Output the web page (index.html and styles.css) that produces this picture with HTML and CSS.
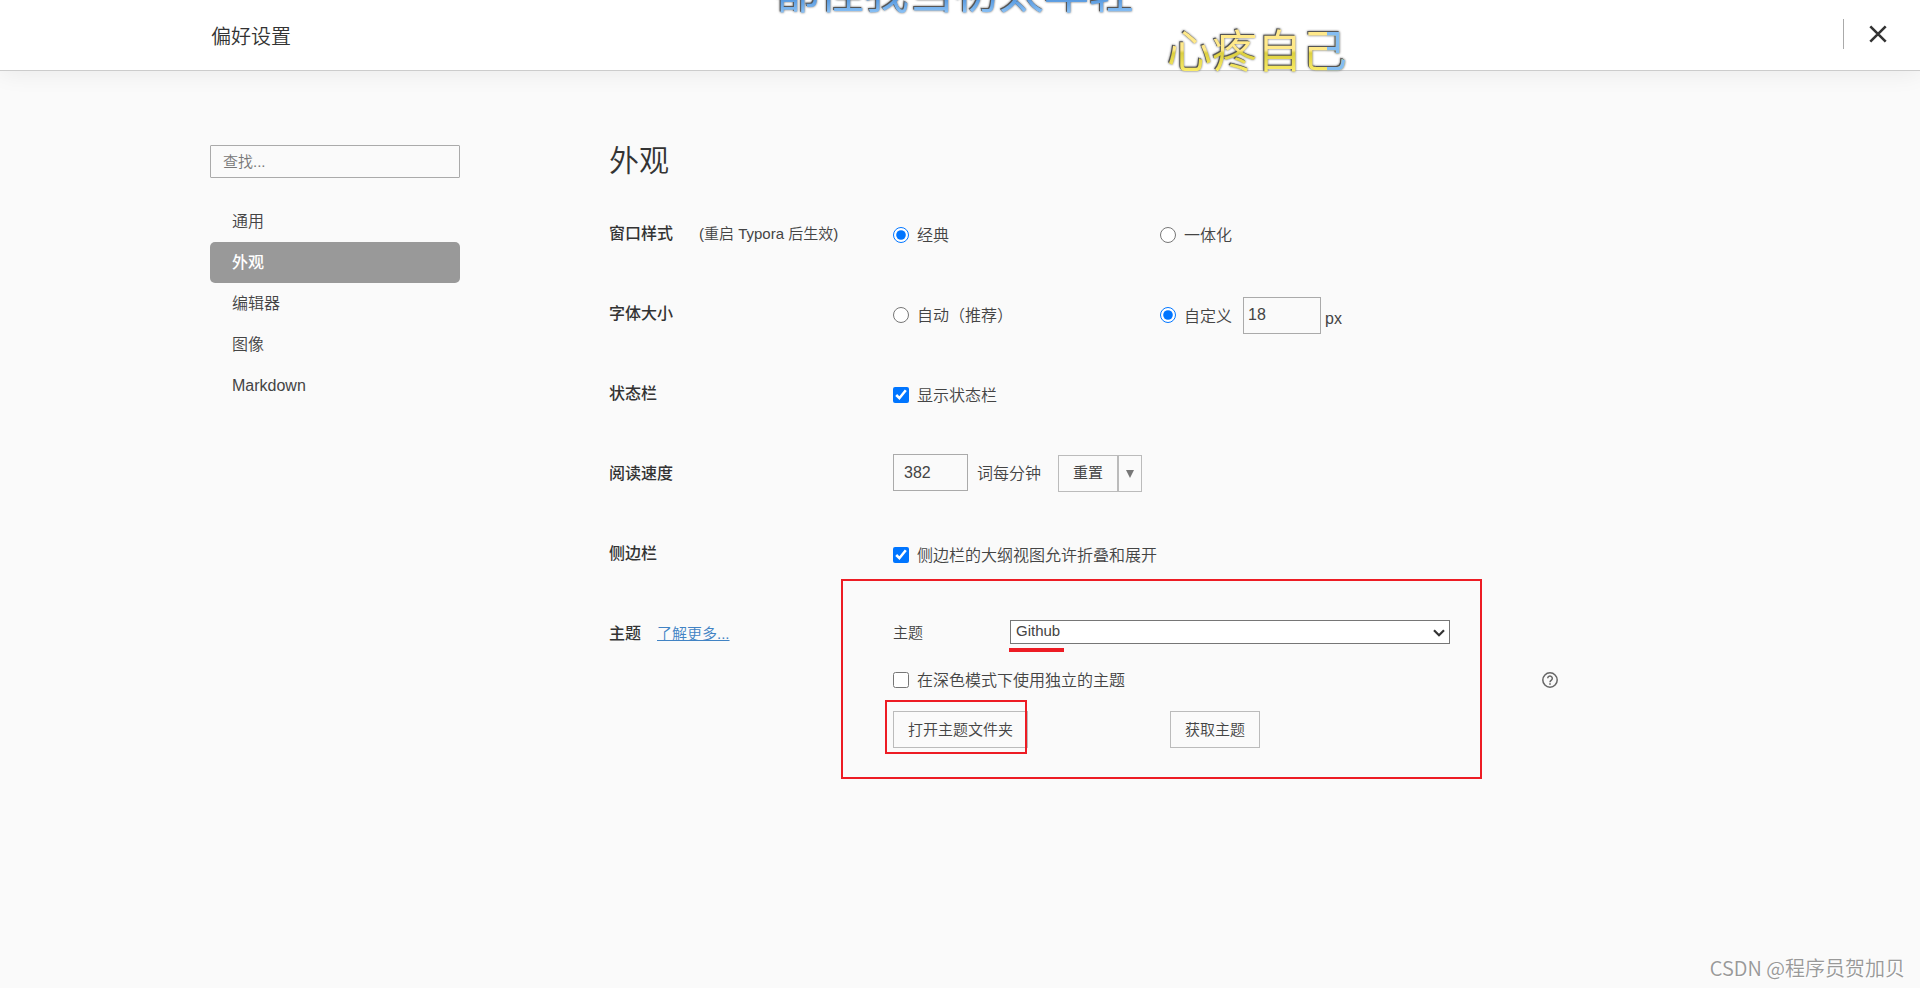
FILE: index.html
```html
<!DOCTYPE html>
<html lang="zh-CN">
<head>
<meta charset="utf-8">
<title>偏好设置</title>
<link rel="stylesheet" href="styles.css">
</head>
<body>
<header class="topbar">
  <h1 class="topbar-title">偏好设置</h1>
  <div class="topbar-actions">
    <button class="close" type="button" aria-label="关闭">
      <svg width="18" height="18" viewBox="0 0 18 18"><path d="M1.3 1.3 16.7 16.7M16.7 1.3 1.3 16.7" fill="none" stroke="#333" stroke-width="2.6"/></svg>
    </button>
  </div>
</header>

<div class="page">
  <aside class="sidebar">
    <input class="search" type="search" placeholder="查找..." aria-label="查找">
    <nav class="menu">
      <a href="#general">通用</a>
      <a href="#appearance" class="active">外观</a>
      <a href="#editor">编辑器</a>
      <a href="#image">图像</a>
      <a href="#markdown">Markdown</a>
    </nav>
  </aside>

  <main class="content">
    <h2 class="title">外观</h2>

    <section class="row">
      <div class="label"><strong>窗口样式</strong><span class="note">(重启 Typora 后生效)</span></div>
      <div class="options">
        <label class="choice"><input type="radio" name="style" checked><span>经典</span></label>
        <label class="choice"><input type="radio" name="style"><span>一体化</span></label>
      </div>
    </section>

    <section class="row">
      <div class="label"><strong>字体大小</strong></div>
      <div class="options">
        <label class="choice"><input type="radio" name="size"><span>自动（推荐）</span></label>
        <div class="inline">
          <label class="choice"><input type="radio" name="size" checked><span>自定义</span></label>
          <input class="field size" type="text" value="18" aria-label="字体大小">
          <span class="unit">px</span>
        </div>
      </div>
    </section>

    <section class="row">
      <div class="label"><strong>状态栏</strong></div>
      <label class="choice"><input type="checkbox" checked><span>显示状态栏</span></label>
    </section>

    <section class="row">
      <div class="label"><strong>阅读速度</strong></div>
      <div class="inline reading">
        <input class="field speed" id="speed" type="text" value="382">
        <label class="speed-label" for="speed">词每分钟</label>
        <div class="group">
          <button class="btn" type="button"><span class="medium">重置</span></button>
          <button class="btn arrow" type="button" aria-label="更多"><svg width="8" height="8" viewBox="0 0 8 8"><path d="M0 0h8L4 8z" fill="#777"/></svg></button>
        </div>
      </div>
    </section>

    <section class="row">
      <div class="label"><strong>侧边栏</strong></div>
      <label class="choice"><input type="checkbox" checked><span>侧边栏的大纲视图允许折叠和展开</span></label>
    </section>

    <section class="row theme">
      <div class="label"><strong>主题</strong><a class="more" href="#themes">了解更多...</a></div>
      <div class="theme-body">
        <div class="theme-select">
          <label for="theme">主题</label>
          <div class="select-wrap">
            <select id="theme"><option>Github</option></select>
            <svg class="chevron" width="12" height="8" viewBox="0 0 12 8"><path d="M1 1.2 6 6.2 11 1.2" fill="none" stroke="#333" stroke-width="2.2"/></svg>
            <span class="mark-line"></span>
          </div>
        </div>
        <div class="theme-dark">
          <label class="choice"><input type="checkbox"><span>在深色模式下使用独立的主题</span></label>
          <button class="help" type="button" aria-label="帮助">
            <svg width="16" height="16" viewBox="0 0 16 16" fill="none" stroke="#666" stroke-width="1.5"><circle cx="8" cy="8" r="7.2"/><path d="M5.700 6.300a2.300 2.300 0 1 1 3.700 1.900C8.500 8.900 8 9.300 8 10.200"/><path d="M8 11.300v1.500" stroke-width="1.600"/></svg>
          </button>
        </div>
        <div class="theme-buttons">
          <div class="marked"><button class="btn" type="button">打开主题文件夹</button><span class="mark-small"></span></div>
          <button class="btn" type="button">获取主题</button>
        </div>
        <span class="mark-large"></span>
      </div>
    </section>
  </main>
</div>

<div class="lyric first">都怪我当初太年轻</div>
<div class="lyric second">心疼自己</div>
<div class="watermark">CSDN @程序员贺加贝</div>
</body>
</html>
```

FILE: styles.css
```css
* { box-sizing: border-box; }

body {
  margin: 0;
  min-height: 100vh;
  background: #fafafa;
  color: #444;
  font: 350 16px/24px "Liberation Sans", "Noto Sans CJK SC", sans-serif;
}

h1, h2 { margin: 0; color: #333; font-weight: 350; }

input, button, select { font: inherit; color: inherit; }

.topbar {
  display: flex;
  align-items: center;
  justify-content: space-between;
  height: 71px;
  padding: 0 33px 0 211px;
  background: #fff;
  border-bottom: 1px solid #ccc;
  box-shadow: 0 2px 24px rgba(0, 0, 0, 0.07);
}
.topbar-title { padding-top: 3px; font-size: 20px; line-height: 28px; }
.topbar-actions {
  height: 30px;
  margin-bottom: 2px;
  padding-left: 25px;
  border-left: 1px solid #aaa;
  display: flex;
  align-items: center;
}
.close, .help { display: flex; padding: 0; border: 0; background: none; }

.page {
  display: grid;
  grid-template-columns: 250px 1fr;
  column-gap: 149px;
  padding: 74px 210px 0;
}

.search {
  display: block;
  appearance: none;
  width: 100%;
  height: 33px;
  padding: 0 12px;
  border: 1px solid #aaa;
  border-radius: 1px;
  background: transparent;
  font-size: 15px;
}
.search::placeholder { color: #777; }

.menu { margin-top: 23px; }
.menu a {
  display: block;
  height: 41px;
  padding-left: 22px;
  line-height: 42px;
  color: inherit;
  text-decoration: none;
}
.menu .active {
  border-radius: 5px;
  background: #999;
  color: #fff;
  font-weight: 500;
}

.title { font-size: 30px; line-height: 32px; margin-bottom: 40px; }

.row {
  display: grid;
  grid-template-columns: 284px 1fr;
  height: 80px;
  align-items: start;
}
.label { display: flex; align-items: center; height: 34px; }
.label strong { color: #333; font-weight: 500; }
.note { margin-left: 26px; font-size: 15px; }
.more { margin-left: 16px; font-size: 15px; color: #4183c4; }

.options { display: grid; grid-template-columns: 267px 1fr; }
.choice { display: flex; align-items: center; height: 35px; gap: 8px; }
.choice input { width: 16px; height: 16px; margin: 0; accent-color: #0075ff; }
.choice span { padding-top: 3px; }
.inline { display: flex; align-items: center; height: 36px; }
.reading { height: 31px; }

.field {
  height: 37px;
  border: 1px solid #aaa;
  background: transparent;
}
.size { width: 78px; margin-left: 11px; padding: 0 4px; }
.unit { margin: 7px 0 0 4px; }
.speed { width: 75px; padding: 0 10px; }
.speed-label { margin-left: 9px; padding-top: 2px; }

.group { display: flex; margin: 1px 0 0 17px; }
.btn {
  height: 37px;
  padding: 0 14px;
  border: 1px solid #bbb;
  background: transparent;
  font-size: 15px;
}
.medium { font-weight: 400; }
.arrow { padding: 0 7px; }

.theme { height: auto; }
.theme-body { position: relative; }
.theme-select { display: flex; align-items: center; height: 30px; font-size: 15px; }
.theme-select label { width: 117px; padding-top: 2px; }
.select-wrap { position: relative; width: 440px; height: 24px; }
.select-wrap select {
  display: block;
  appearance: none;
  width: 100%;
  height: 24px;
  padding: 0 5px 3px;
  border: 1px solid #767676;
  border-radius: 0;
  background: #fff;
  line-height: 20px;
}
.chevron { position: absolute; right: 5px; top: 9px; pointer-events: none; }
.theme-dark {
  display: flex;
  align-items: center;
  justify-content: space-between;
  width: 665px;
  margin-top: 15px;
}
.theme-buttons {
  display: grid;
  grid-template-columns: 277px auto;
  justify-content: start;
  margin-top: 14px;
}
.marked { position: relative; }

.mark-line { position: absolute; left: -1px; top: 28px; width: 55px; height: 4px; background: #ed1c24; }
.mark-small { position: absolute; left: -8px; top: -11px; width: 142px; height: 54px; border: 2px solid #ed1c24; }
.mark-large { position: absolute; left: -52px; top: -38px; width: 641px; height: 200px; border: 2px solid #ed1c24; pointer-events: none; }

.lyric {
  position: absolute;
  color: transparent;
  font-size: 45px;
  font-weight: 400;
  line-height: 60px;
  white-space: nowrap;
  background-clip: text;
  -webkit-background-clip: text;
  filter: drop-shadow(-1px -1px 0 #555) drop-shadow(0 0 1px #666);
}
.first { left: 774px; top: -36px; background-image: linear-gradient(#5a9be0 60%, #9fd2ff 90%); }
.second {
  left: 1167px;
  top: 23px;
  background-image:
    linear-gradient(90deg, transparent 89%, #84bdf2 89%),
    linear-gradient(#ffe98a 45%, #dcd040 50%, #fff070 85%);
}

.watermark {
  position: absolute;
  right: 15px;
  bottom: 6px;
  font-family: "Noto Sans CJK SC", sans-serif;
  font-size: 20px;
  line-height: 28px;
  color: #999;
  text-shadow: 1px 1px 0 #fff;
}
```
